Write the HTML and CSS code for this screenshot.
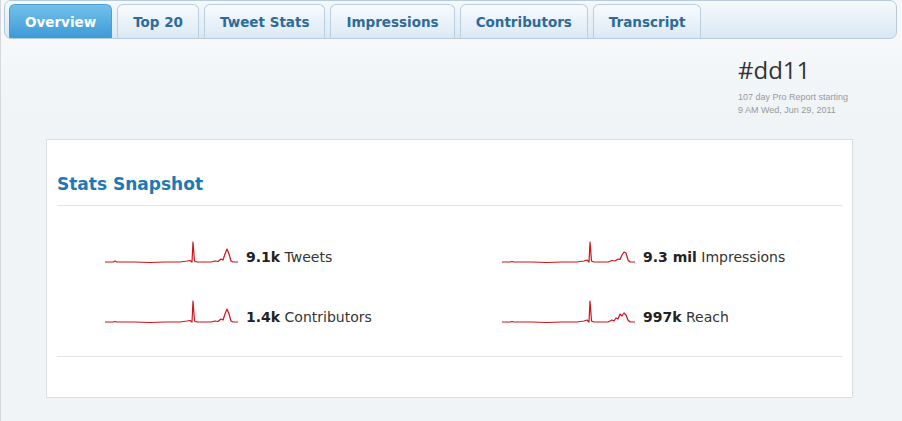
FILE: index.html
```html
<!DOCTYPE html>
<html>
<head>
<meta charset="utf-8">
<link rel="stylesheet" href="styles.css">
</head>
<body>
<div class="page">
  <nav class="tabbar">
    <a class="tab active">Overview</a>
    <a class="tab">Top 20</a>
    <a class="tab">Tweet Stats</a>
    <a class="tab">Impressions</a>
    <a class="tab">Contributors</a>
    <a class="tab">Transcript</a>
  </nav>
  <header class="head">
    <div class="headblock">
      <div class="tag">#dd11</div>
      <div class="sub">107 day Pro Report starting<br>9 AM Wed, Jun 29, 2011</div>
    </div>
  </header>
  <section class="panel">
    <h2 class="title">Stats Snapshot</h2>
    <div class="stats">
      <div class="stat">
        <svg class="spark" width="136" height="26" viewBox="0 0 136 26"><polyline points="0,22 8,22 10,21 12,22 30,22 45,22.5 60,22 75,22 82,21 85,20.5 87,22 88,2 89.5,21 92,22 100,22 106,22 110,21 113,21.5 116,19 118,20 120,14 122,9 124,14 126,21 128,22 133,22" /></svg>
        <span class="val"><b>9.1k</b> Tweets</span>
      </div>
      <div class="stat">
        <svg class="spark" width="136" height="26" viewBox="0 0 136 26"><polyline points="0,22 8,22 10,21.5 12,22 30,22 45,22.5 60,22 75,22 82,21 85,20 87,22 88,2 89.5,21 92,22 100,22 106,22 110,20.5 113,21 116,19 118,19.5 120,15 122,12 124,13 126,20 128,22 133,22" /></svg>
        <span class="val"><b>9.3 mil</b> Impressions</span>
      </div>
      <div class="stat">
        <svg class="spark" width="136" height="26" viewBox="0 0 136 26"><polyline points="0,22 8,22 10,21.5 12,22 30,22 45,22.5 60,22 75,22 82,21 85,20.5 87,22 88,1 89.5,21 92,22 100,22 106,22 110,21 113,21.5 116,19 118,20 120,14 122,9 124,14 126,21 128,22 133,22" /></svg>
        <span class="val"><b>1.4k</b> Contributors</span>
      </div>
      <div class="stat">
        <svg class="spark" width="136" height="26" viewBox="0 0 136 26"><polyline points="0,22 8,22 10,21.5 12,22 30,22 45,22.5 60,22 75,22 82,21 85,20 87,22 88,1 89.5,21 92,22 100,22 106,22 110,20 112,21 114,18 116,19 118,14 120,16 122,13 124,15 126,20 128,22 133,22" /></svg>
        <span class="val"><b>997k</b> Reach</span>
      </div>
    </div>
  </section>
</div>
</body>
</html>
```
FILE: styles.css
```css
html, body {
  margin: 0;
  padding: 0;
}
body {
  background: #f0f4f7;
  font-family: "DejaVu Sans", Verdana, sans-serif;
  color: #333;
}
.page {
  border-left: 1px solid #d4d9de;
  min-height: 421px;
  box-sizing: border-box;
  background: linear-gradient(#f6f8fa 40px, #f0f4f7 110px);
}
.tabbar {
  margin-left: 3px;
  width: 893px;
  height: 39px;
  box-sizing: border-box;
  border: 1px solid #b6ccdd;
  border-radius: 7px;
  background: linear-gradient(#f5f9fc, #dae8f4);
  display: flex;
  align-items: flex-end;
  gap: 5px;
  padding-left: 4px;
  overflow: hidden;
}
.tab {
  height: 34px;
  box-sizing: border-box;
  display: flex;
  align-items: center;
  padding: 0 15px;
  border: 1px solid #b9cfe0;
  border-bottom: none;
  border-radius: 6px 6px 0 0;
  background: linear-gradient(#f8fbfd, #dbe9f5);
  color: #2e6b98;
  font-weight: bold;
  font-size: 13.5px;
  text-decoration: none;
}
.tab.active {
  background: linear-gradient(#72c1ec, #3d9ad6);
  border-color: #4a9fd4;
  color: #fff;
}
.head {
  display: flex;
  justify-content: flex-end;
  padding: 15px 44px 0 0;
}
.headblock {
  width: 120px;
}
.tag {
  font-family: "Open Sans", "DejaVu Sans", sans-serif;
  font-size: 24px;
  line-height: 32px;
  color: #333;
}
.sub {
  margin-top: 5px;
  font-family: "Liberation Sans", Arial, sans-serif;
  font-size: 9px;
  line-height: 13px;
  color: #999;
}
.panel {
  margin: 22px 0 0 45px;
  width: 807px;
  box-sizing: border-box;
  background: #fff;
  border: 1px solid #dcdedf;
  padding: 33px 10px 40px;
}
.title {
  margin: 0;
  font-size: 17px;
  line-height: 22px;
  color: #1d79b5;
  font-weight: bold;
  padding-bottom: 10px;
  border-bottom: 1px solid #e3e3e3;
}
.stats {
  display: grid;
  grid-template-columns: 397px 1fr;
  row-gap: 34px;
  padding: 34px 0 30px;
  border-bottom: 1px solid #e3e3e3;
}
.stat {
  display: flex;
  align-items: flex-end;
  gap: 5px;
  padding-left: 48px;
}
.spark {
  display: block;
  flex: none;
}
.spark polyline {
  fill: none;
  stroke: #d0121b;
  stroke-width: 1.2;
  stroke-linejoin: round;
}
.val {
  font-size: 14px;
  line-height: 18px;
  color: #333;
}
.val b {
  color: #222;
}
```
